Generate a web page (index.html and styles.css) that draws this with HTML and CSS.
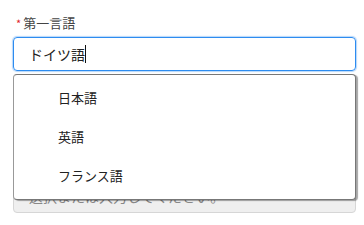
FILE: index.html
```html
<!DOCTYPE html>
<html lang="ja">
<head>
  <meta charset="UTF-8" />
  <meta name="viewport" content="width=device-width, initial-scale=1.0" />
  <title>言語選択</title>
  <link rel="stylesheet" href="styles.css">
</head>
<body>
  <form class="form">
    <div class="field">
      <label class="label"><span class="req">*</span>第一言語</label>
      <div class="select">
        <div class="input focus">ドイツ語<span class="caret"></span></div>
        <ul class="dropdown">
          <li>日本語</li>
          <li>英語</li>
          <li>フランス語</li>
        </ul>
      </div>
    </div>

    <div class="field">
      <div class="label"></div>
      <div class="input dark"></div>
    </div>

    <div class="field">
      <div class="label"></div>
      <div class="input disabled">選択または入力してください。</div>
    </div>
  </form>
</body>
</html>
```

FILE: styles.css
```css
*, *::before, *::after {
  box-sizing: border-box;
  margin: 0;
  padding: 0;
}

body {
  font-family: "Noto Sans CJK JP", "Noto Sans", sans-serif;
  background-color: #fff;
  color: #333;
  padding: 15px 8px 0 13px;
}

.field {
  display: flex;
  flex-direction: column;
  gap: 6px;
  margin-bottom: 15px;
}

.label {
  height: 16px;
  font-size: 13px;
  line-height: 16px;
  color: #444;
  display: flex;
  align-items: center;
  padding-left: 3px;
}

.req {
  color: #e0242b;
  font-size: 11px;
  margin-right: 2px;
}

.select {
  position: relative;
}

.input {
  height: 34px;
  border: 1px solid #dcdee2;
  border-radius: 4px;
  padding-left: 15px;
  font-size: 14px;
  line-height: 32px;
  display: flex;
  align-items: center;
}

.input.focus {
  border-color: #2d8cf0;
  box-shadow: 0 0 1px 1px rgba(45, 140, 240, 0.35);
  color: #222;
}

.caret {
  display: inline-block;
  width: 1px;
  height: 18px;
  background-color: #111;
}

.input.dark {
  border-color: #666;
}

.input.disabled {
  background-color: #efefef;
  border-color: #d6d6d6;
  color: #888;
}

.dropdown {
  position: absolute;
  top: 37px;
  left: 0;
  right: 0;
  z-index: 10;
  list-style: none;
  background-color: #fff;
  border: 1px solid #777;
  border-left-color: #999;
  border-radius: 4px;
  box-shadow: 2px 1px 1px rgba(0, 0, 0, 0.35);
  padding: 3px 0;
  height: 126px;
}

.dropdown li {
  height: 39px;
  line-height: 39px;
  padding-left: 44px;
  font-size: 13px;
  color: #222;
}
```
